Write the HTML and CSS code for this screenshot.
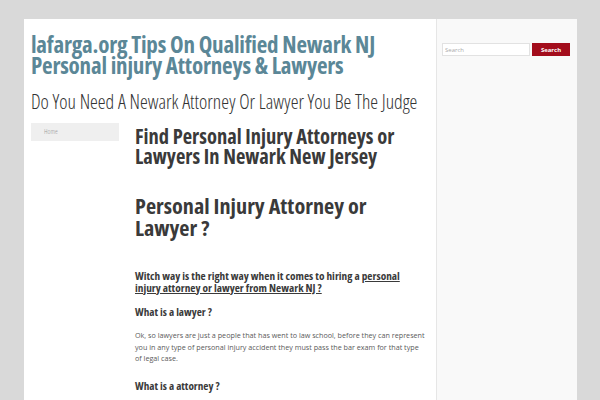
FILE: index.html
```html
<!DOCTYPE html>
<html>
<head>
<meta charset="utf-8">
<link rel="stylesheet" href="styles.css">
</head>
<body>
<div class="page">
  <div class="main">
    <header class="site-header">
      <h1 class="site-title">lafarga.org Tips On Qualified Newark NJ Personal injury Attorneys &amp; Lawyers</h1>
      <p class="site-desc">Do You Need A Newark Attorney Or Lawyer You Be The Judge</p>
    </header>
    <div class="content-row">
      <nav class="nav">
        <a class="nav-item" href="#">Home</a>
      </nav>
      <article class="article">
        <h2 class="entry-title">Find Personal Injury Attorneys or Lawyers In Newark New Jersey</h2>
        <h2 class="big-heading">Personal Injury Attorney or Lawyer ?</h2>
        <h3 class="lead">Witch way is the right way when it comes to hiring a <a href="#">personal injury attorney or lawyer from Newark NJ ?</a></h3>
        <h4 class="sub">What is a lawyer ?</h4>
        <p class="text">Ok, so lawyers are just a people that has went to law school, before they can represent you in any type of personal injury accident they must pass the bar exam for that type of legal case.</p>
        <h4 class="sub sub-last">What is a attorney ?</h4>
      </article>
    </div>
  </div>
  <aside class="sidebar">
    <form class="search">
      <input class="search-input" type="text" placeholder="Search">
      <button class="search-btn" type="button">Search</button>
    </form>
  </aside>
</div>
</body>
</html>
```

FILE: styles.css
```css
html, body {
  margin: 0;
  padding: 0;
}
body {
  background: #d9d9d9;
  font-family: "Open Sans", "Liberation Sans", sans-serif;
  font-stretch: 75%;
  height: 400px;
  overflow: hidden;
}
.page {
  display: flex;
  margin: 19px 0 0 24px;
  width: 553px;
  min-height: 381px;
}
.main {
  width: 412px;
  background: #fff;
  padding: 0 10px 0 7px;
  box-sizing: border-box;
}
.site-header {
  padding-top: 15px;
}
.site-title {
  margin: 0;
  font-size: 23px;
  line-height: 21px;
  font-weight: 700;
  color: #5b8797;
  letter-spacing: -0.2px;
}
.site-desc {
  margin: 15px 0 0;
  font-size: 19.7px;
  line-height: 22px;
  font-weight: 300;
  color: #333;
  white-space: nowrap;
}
.content-row {
  display: flex;
  gap: 16px;
  margin-top: 10px;
}
.nav {
  width: 88px;
  flex: none;
}
.nav-item {
  display: block;
  height: 18px;
  line-height: 18px;
  background: #efefef;
  color: #999;
  font-size: 7px;
  font-weight: 300;
  text-decoration: none;
  padding-left: 13px;
}
.article {
  flex: 1;
  color: #3a3a3a;
}
.entry-title {
  margin: 3px 0 0;
  font-size: 20.5px;
  line-height: 20px;
  font-weight: 700;
}
.big-heading {
  margin: 29px 0 0;
  font-size: 22.2px;
  line-height: 22px;
  font-weight: 700;
}
.lead {
  margin: 31px 0 0;
  font-size: 11.3px;
  line-height: 11.5px;
  font-weight: 700;
}
.lead a {
  color: #3a3a3a;
}
.sub {
  margin: 12px 0 0;
  font-size: 11.2px;
  line-height: 14px;
  font-weight: 700;
}
.sub-last {
  margin-top: 14.5px;
}
.text {
  margin: 11px 0 0;
  font-size: 7.2px;
  line-height: 11.5px;
  font-stretch: 100%;
  color: #5a5a5a;
}
.sidebar {
  width: 141px;
  background: #f9f9f9;
  border-left: 1px solid #e6e6e6;
  box-sizing: border-box;
  padding: 24px 6px 0 5px;
}
.search {
  display: flex;
  gap: 2px;
}
.search-input {
  width: 88px;
  height: 13px;
  box-sizing: border-box;
  border: 1px solid #e2e2e2;
  background: #fff;
  font-family: "Open Sans", sans-serif;
  font-size: 6px;
  padding: 0 2px;
  margin: 0;
  outline: none;
}
.search-input::placeholder {
  color: #aaa;
}
.search-btn {
  width: 38px;
  height: 13px;
  border: 0;
  margin: 0;
  padding: 0;
  background: #a30d1c;
  color: #fff;
  font-family: "Open Sans", sans-serif;
  font-size: 6px;
  font-weight: 700;
}
```
